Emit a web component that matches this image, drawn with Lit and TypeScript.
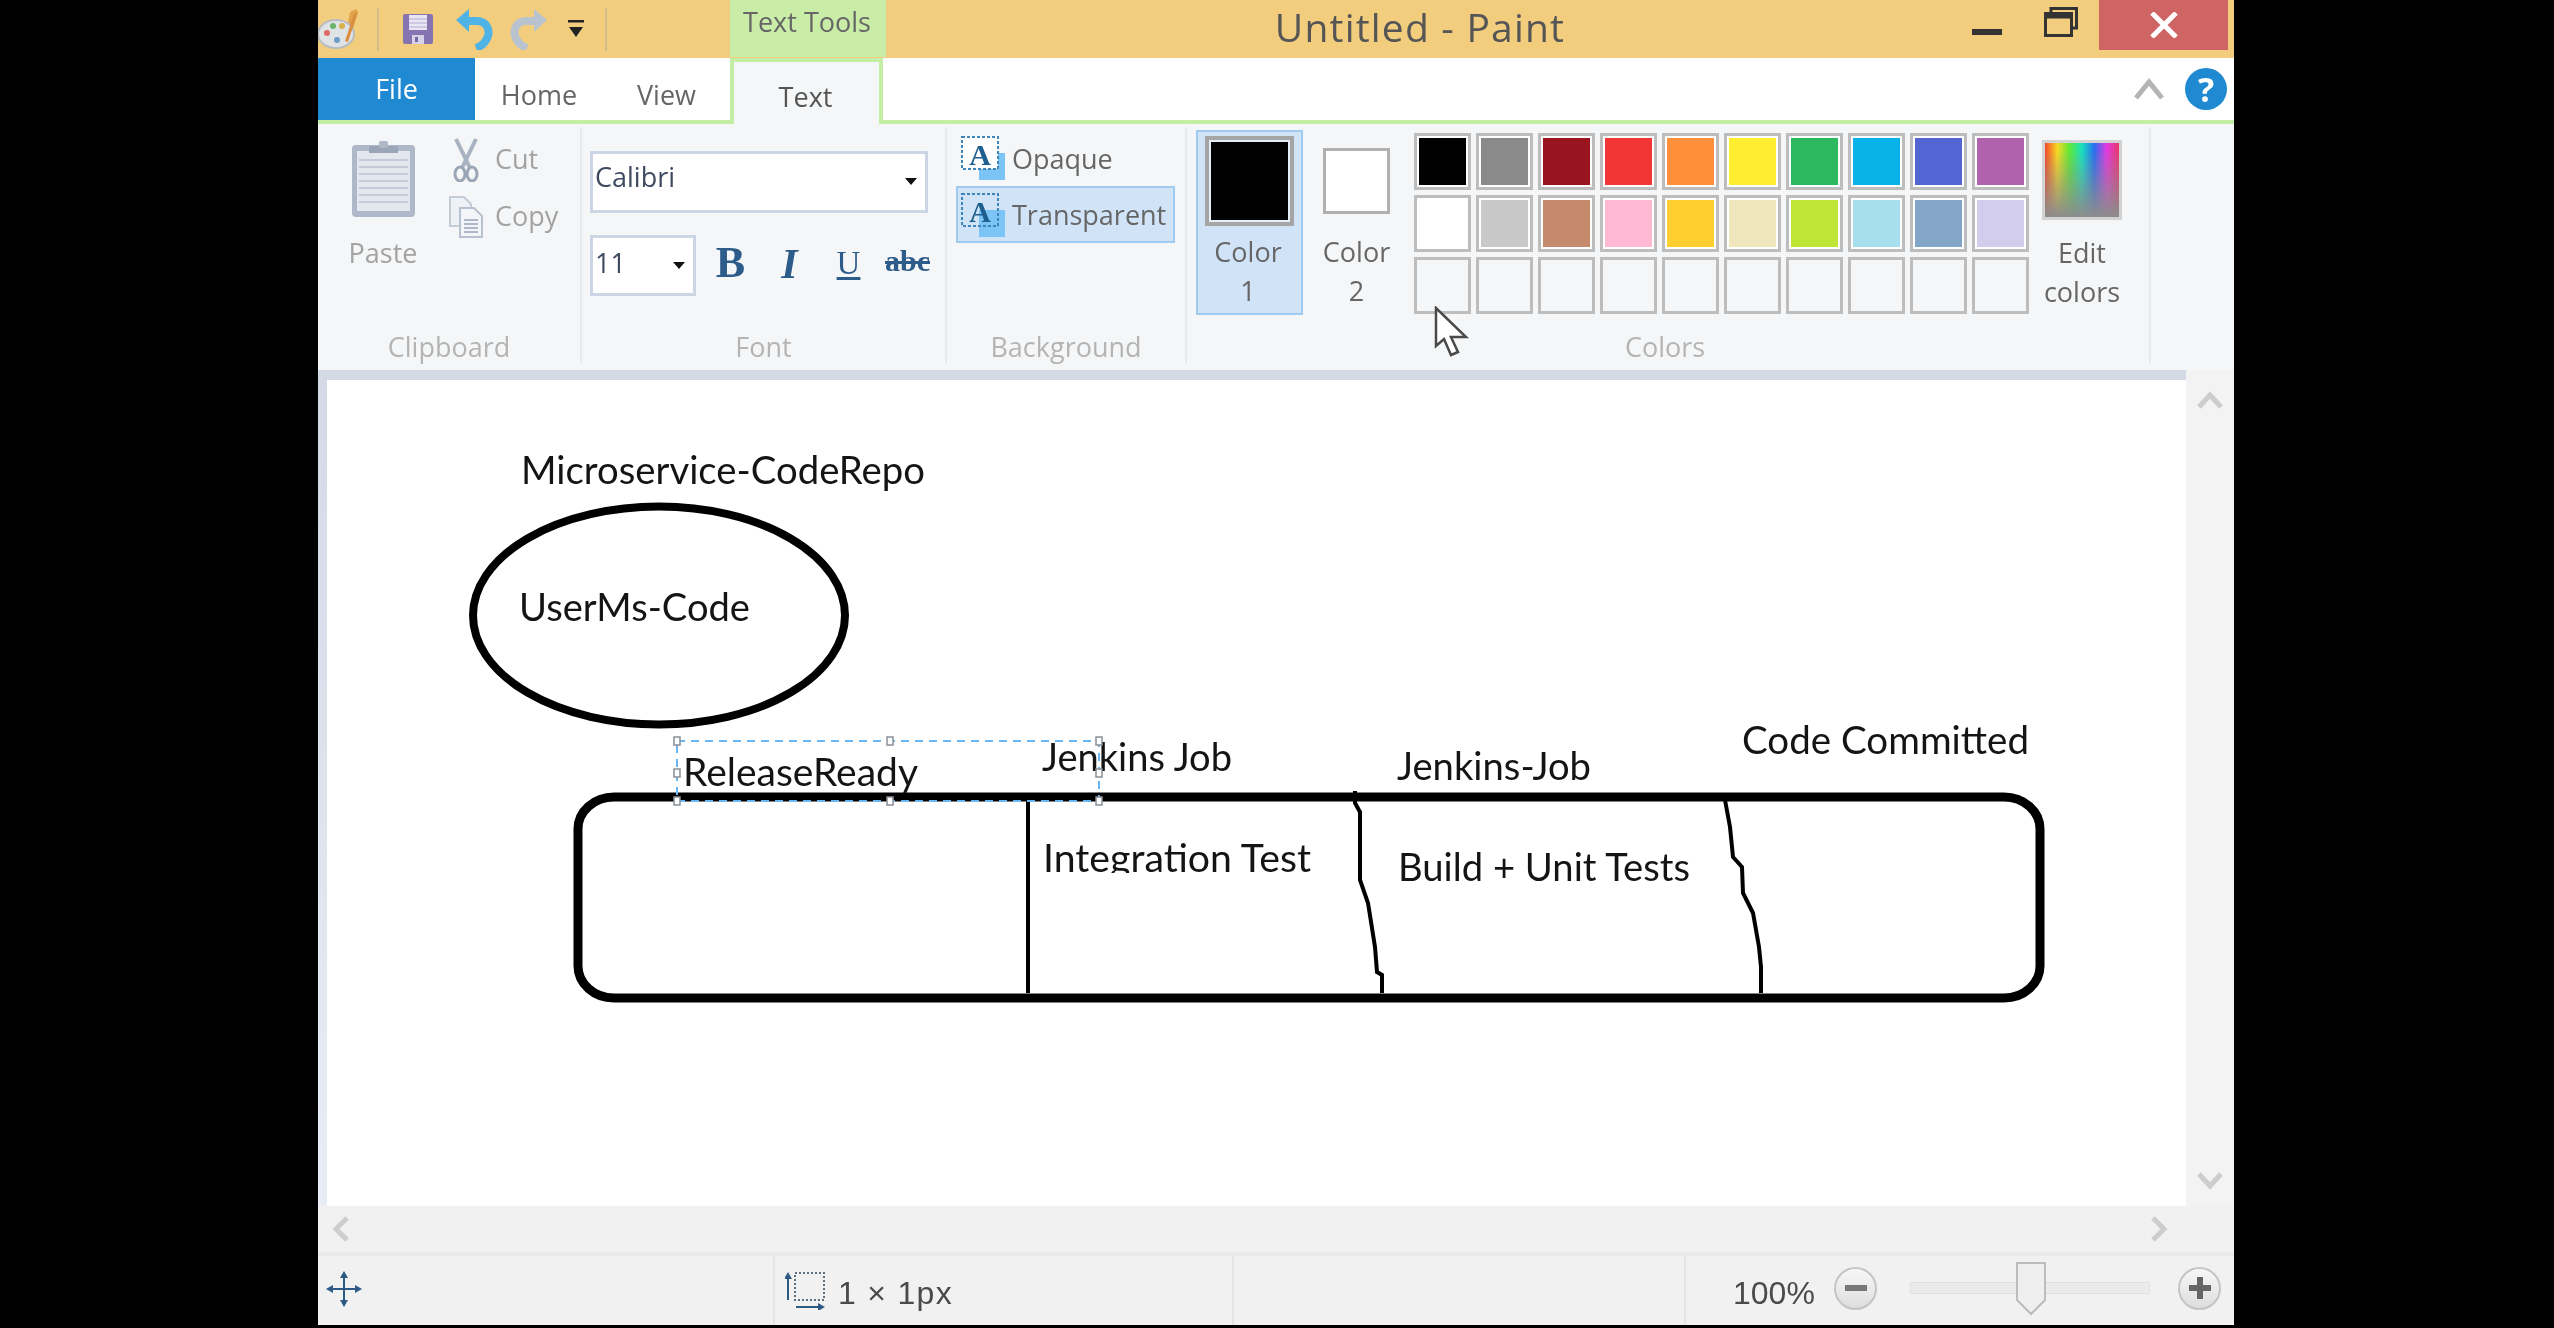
import { LitElement, html, css, svg } from "lit";
import { customElement } from "lit/decorators.js";

const STANDARD_COLORS = [
  "#000000", "#8a8a8a", "#98141f", "#f23535", "#ff8f3a", "#ffee30", "#2cb85f", "#09b3ea", "#5365d3", "#b062ad",
  "#ffffff", "#c8c8c8", "#c58a6c", "#ffb9d2", "#ffce30", "#f1e7bd", "#bfe537", "#a8dfee", "#83a6c8", "#d2cdea",
];

// text, x, baseline, width - page coordinates, the svg viewBox lines up with them
const LABELS: [string, number, number, number][] = [
  ["Microservice-CodeRepo", 521, 484, 404],
  ["UserMs-Code", 519, 621, 231],
  ["ReleaseReady", 683, 786, 235],
  ["Jenkins Job", 1042, 771, 190],
  ["Jenkins-Job", 1397, 780, 194],
  ["Code Committed", 1742, 754, 287],
  ["Build + Unit Tests", 1398, 881, 292],
];

const HANDLES: [number, number][] = [
  [677, 741], [890, 741], [1099, 741],
  [677, 773], [1099, 773],
  [677, 801], [890, 801], [1099, 801],
];

@customElement("app-root")
export class AppRoot extends LitElement {
  static styles = css`
    :host {
      display: block;
      width: 2554px;
      height: 1328px;
      background: #000;
      overflow: hidden;
      font-family: "Open Sans", "Noto Sans", sans-serif;
      font-size: 27px;
      color: #666;
    }
    .window {
      margin-left: 318px;
      width: 1916px;
      height: 1325px;
      display: flex;
      flex-direction: column;
      background: #f5f6f7;
      filter: blur(0.7px);
    }
    svg { display: block; flex: none; }

    /* title bar */
    .titlebar {
      height: 58px;
      flex: none;
      display: flex;
      background: #f2cd7e;
    }
    .qat {
      width: 412px;
      flex: none;
      display: flex;
      align-items: center;
    }
    .qat-sep {
      width: 2px;
      height: 43px;
      background: #d3bd8d;
      margin-left: 15px;
      margin-right: 24px;
      flex: none;
    }
    .qat-sep.last { margin-left: 21px; margin-right: 0; }
    .qat-undo { margin-left: 22px; }
    .qat-redo { margin-left: 17px; }
    .qat-more { margin-left: 20px; }
    .context-title {
      width: 156px;
      flex: none;
      height: 57px;
      background: #c9eda7;
      text-align: center;
      line-height: 44px;
      color: #666;
      padding-right: 2px;
      box-sizing: border-box;
    }
    .title {
      flex: 1;
      text-align: center;
      font-size: 39px;
      letter-spacing: 1.2px;
      line-height: 54px;
      color: #555;
      margin-right: 18px;
    }
    .winctl {
      display: flex;
      align-items: flex-start;
      flex: none;
      margin-right: 6px;
    }
    .min {
      width: 30px;
      height: 6px;
      margin-top: 29px;
      background: #333;
    }
    .restore { margin: 7px 21px 0 42px; }
    .close {
      width: 129px;
      height: 50px;
      background: #cf6464;
      display: flex;
      align-items: center;
      justify-content: center;
    }

    /* tabs */
    .tabs {
      height: 66px;
      flex: none;
      display: flex;
      background: #fff;
      box-sizing: border-box;
      border-bottom: 4px solid #c5eea5;
    }
    .tab {
      text-align: center;
      line-height: 74px;
      flex: none;
    }
    .tab.file {
      width: 157px;
      background: #1f8ad1;
      color: #fff;
      line-height: 62px;
    }
    .tab.home { width: 128px; }
    .tab.view { width: 127px; }
    .tab.text {
      width: 153px;
      height: 66px;
      box-sizing: border-box;
      background: #f5f6f7;
      border: 4px solid #c5eea5;
      border-bottom: none;
      line-height: 70px;
      color: #555;
      padding-right: 2px;
    }
    .tab-end {
      margin-left: auto;
      display: flex;
      align-items: center;
      padding-right: 7px;
      padding-bottom: 1px;
    }
    .help {
      width: 42px;
      height: 42px;
      margin-left: 20px;
      border-radius: 50%;
      background: #1f8ad1;
      color: #fff;
      font-weight: 700;
      font-size: 34px;
      line-height: 42px;
      text-align: center;
    }

    /* ribbon */
    .ribbon {
      height: 246px;
      flex: none;
      box-sizing: border-box;
      padding: 3px 0 7px;
      display: flex;
      position: relative;
      background: #f5f6f7;
    }
    .group {
      flex: none;
      box-sizing: border-box;
      border-right: 2px solid #e7e9ec;
      display: flex;
      flex-direction: column;
    }
    .group.clipboard { width: 264px; }
    .group.font { width: 365px; }
    .group.background { width: 240px; }
    .group.colors { width: 964px; }
    .group-body { height: 204px; display: flex; }
    .group-label {
      height: 32px;
      line-height: 32px;
      text-align: center;
      color: #b4b4b4;
    }
    .group.colors .group-label { padding-right: 6px; }
    .disabled { color: #a3a3a3; }

    .paste {
      width: 130px;
      flex: none;
      display: flex;
      flex-direction: column;
      align-items: center;
      padding-top: 13px;
    }
    .paste span { margin-top: 17px; line-height: 36px; }
    .clip-rows { padding-top: 3px; }
    .clip-row {
      height: 57px;
      display: flex;
      align-items: center;
    }
    .clip-icon {
      width: 36px;
      margin-right: 11px;
      display: flex;
      justify-content: center;
      padding-top: 2px;
    }

    .font-body {
      flex-direction: column;
      padding: 24px 0 0 8px;
    }
    .combo {
      box-sizing: border-box;
      border: 3px solid #ccd5e3;
      background: #fff;
      display: flex;
      justify-content: space-between;
      padding: 0 6px 0 2px;
      color: #3e4a5f;
    }
    .combo.family {
      width: 338px;
      height: 62px;
      line-height: 46px;
    }
    .combo.size {
      width: 106px;
      height: 61px;
      line-height: 50px;
    }
    .caret {
      width: 0;
      height: 0;
      border: 6px solid transparent;
      border-top: 7px solid #111;
      border-bottom: none;
      margin: 24px 2px 0 0;
    }
    .font-row {
      display: flex;
      align-items: center;
      margin-top: 21px;
    }
    .fmt {
      width: 59px;
      flex: none;
      text-align: center;
      font-family: "Liberation Serif", serif;
      color: #2e5c8a;
      line-height: 54px;
      padding-bottom: 3px;
    }
    .fmt.b { margin-left: 5px; font-weight: 700; font-size: 44px; padding-bottom: 4px; }
    .fmt.i { font-style: italic; font-weight: 700; font-size: 42px; }
    .fmt.u {
      font-size: 33px;
      text-decoration: underline;
      text-underline-offset: 3px;
      padding-bottom: 4px;
    }
    .fmt.s {
      font-size: 30px;
      font-weight: 700;
      text-decoration: line-through;
      padding-bottom: 8px;
    }

    .bg-body {
      flex-direction: column;
      padding: 2px 0 0 9px;
    }
    .bg-btn {
      width: 219px;
      height: 57px;
      box-sizing: border-box;
      padding-left: 3px;
      display: flex;
      align-items: center;
      gap: 7px;
      border: 2px solid transparent;
    }
    .bg-btn.on {
      background: #d1e4f7;
      border-color: #9fcbf3;
    }
    .bg-text { padding-top: 2px; }
    .bg-btn.on .bg-text { padding-top: 0; }

    .colors-body { padding-left: 9px; }
    .pick {
      width: 107px;
      flex: none;
      box-sizing: border-box;
      margin-top: 3px;
      height: 185px;
      display: flex;
      flex-direction: column;
      align-items: center;
      text-align: center;
      line-height: 39px;
      border: 2px solid transparent;
    }
    .pick.on {
      background: #d1e4f7;
      border-color: #9fcbf3;
    }
    .pick-text { padding-right: 3px; }
    .chip {
      box-sizing: border-box;
      flex: none;
    }
    .chip.one {
      width: 89px;
      height: 90px;
      margin-top: 4px;
      margin-bottom: 6px;
      border: 4px solid #a5a5a5;
      padding: 2px;
      background: #e4eef8;
    }
    .chip.one div { width: 100%; height: 100%; background: #000; }
    .chip.two {
      width: 67px;
      height: 66px;
      margin-top: 16px;
      margin-bottom: 18px;
      border: 3px solid #b0b0b0;
      background: #fff;
    }
    .palette {
      margin: 6px 0 0 4px;
      display: grid;
      grid-template-columns: repeat(10, 57px);
      grid-auto-rows: 57px;
      gap: 5px;
      flex: none;
      height: 181px;
    }
    .cell {
      box-sizing: border-box;
      border: 3px solid #bdbdbd;
      padding: 2px;
      background: #fff;
    }
    .cell div { width: 100%; height: 100%; }
    .cell.empty { background: #f5f6f7; }
    .edit {
      margin-left: 13px;
      width: 80px;
      flex: none;
      display: flex;
      flex-direction: column;
      align-items: center;
      text-align: center;
      line-height: 39px;
      color: #666;
      padding-top: 13px;
    }
    .rainbow {
      width: 80px;
      height: 80px;
      box-sizing: border-box;
      border: 3px solid #d2d2d2;
      margin-bottom: 13px;
      background:
        linear-gradient(to bottom, rgba(150, 150, 150, 0) 10%, rgba(140, 140, 140, 1) 100%),
        linear-gradient(to right, #f2472d, #f7d923, #5fe838, #18e0c0, #2a6ef0, #e23be0, #e8386a);
    }
    .cursor {
      position: absolute;
      left: 1116px;
      top: 182px;
    }

    /* work area */
    .work {
      flex: 1;
      min-height: 0;
      display: flex;
    }
    .canvas-wrap {
      width: 1868px;
      flex: none;
      box-sizing: border-box;
      padding: 10px 0 0 9px;
      background: linear-gradient(#d3dae6, #e8edf5);
    }
    .canvas {
      height: 100%;
      background: #fff;
      position: relative;
    }
    .vscroll {
      flex: 1;
      background: #f3f3f3;
      display: flex;
      flex-direction: column;
      align-items: center;
      justify-content: space-between;
      padding: 20px 0 15px;
    }
    .hscroll {
      height: 46px;
      flex: none;
      background: #f1f1f1;
      display: flex;
      align-items: center;
      justify-content: space-between;
      padding: 0 66px 0 14px;
    }
    .canvas-draw text {
      font-family: "Lato", "Open Sans", sans-serif;
      font-size: 38px;
      fill: #141414;
    }

    /* status bar */
    .status {
      height: 73px;
      flex: none;
      box-sizing: border-box;
      border-top: 4px solid #e9e9e9;
      background: #f1f1f1;
      display: flex;
      font-family: "Liberation Sans", sans-serif;
      font-size: 32px;
      color: #4a4a4a;
    }
    .pane {
      box-sizing: border-box;
      flex: none;
      display: flex;
      align-items: center;
      border-right: 2px solid #e4e4e4;
    }
    .pane.pos { width: 457px; padding: 0 0 3px 8px; }
    .pane.size { width: 459px; padding-left: 10px; gap: 13px; }
    .pane.spacer { width: 452px; }
    .pane-text { padding-top: 6px; letter-spacing: 1.3px; }
    .zoom {
      flex: 1;
      display: flex;
      align-items: center;
      padding: 0 0 5px 47px;
    }
    .zoom-text { padding-top: 11px; width: 101px; flex: none; }
    .zoom-btn {
      width: 43px;
      height: 43px;
      flex: none;
      box-sizing: border-box;
      border-radius: 50%;
      border: 2px solid #c4c4c4;
      background: linear-gradient(#f7f7f7, #dedede);
      display: flex;
      align-items: center;
      justify-content: center;
    }
    .slider {
      width: 240px;
      height: 12px;
      flex: none;
      box-sizing: border-box;
      margin: 0 28px 0 33px;
      background: #ebebeb;
      border: 1px solid #e0e0e0;
      position: relative;
    }
    .thumb {
      position: absolute;
      left: 105px;
      top: -21px;
    }
  `;

  private palette() {
    return html`
      <svg width="44" height="42" viewBox="0 0 44 42">
        <path d="M32 4 L38 1 L40 4 L30 36 L26 36 Z" fill="#e2a24c" />
        <ellipse cx="18" cy="26" rx="18" ry="14" fill="#dfe3e6" stroke="#b9bcc0" stroke-width="2" />
        <circle cx="9" cy="25" r="3" fill="#e06a6a" />
        <circle cx="15" cy="18" r="3" fill="#6cb26a" />
        <circle cx="24" cy="18" r="3" fill="#d9b04a" />
        <circle cx="19" cy="32" r="3" fill="#6c9cc8" />
        <path d="M36 6 L40 4 L30 34 L27 33 Z" fill="#d98f3f" />
      </svg>
    `;
  }

  private floppy() {
    return html`
      <svg width="30" height="30" viewBox="0 0 30 30">
        <rect width="30" height="30" rx="2" fill="#8674b0" />
        <rect x="6" y="1" width="18" height="15" fill="#e8e6f2" />
        <path d="M6 5 H24 M6 9 H24 M6 13 H24" stroke="#b6abd3" stroke-width="1" />
        <rect x="9" y="21" width="12" height="9" fill="#d6d1e6" />
        <rect x="12" y="23" width="3" height="5" fill="#7a68a6" />
      </svg>
    `;
  }

  private arrow(color: string, flip: boolean) {
    return html`
      <svg width="38" height="42" viewBox="0 0 38 42" class=${flip ? "qat-redo" : "qat-undo"}>
        <g transform=${flip ? "translate(38 0) scale(-1 1)" : ""}>
          <path d="M12 13 H22 C31 13 35 21 33 28 C31 34 27 38 21 40" fill="none" stroke=${color} stroke-width="8" />
          <path d="M14 1 V24 L1 12 Z" fill=${color} />
        </g>
      </svg>
    `;
  }

  private clipboard() {
    return html`
      <svg width="65" height="78" viewBox="0 0 65 78">
        <rect x="1" y="5" width="63" height="72" rx="4" fill="#aeb8c8" />
        <rect x="6" y="11" width="53" height="60" fill="#e3e7ee" />
        <path d="M8 20 H57 M8 27 H57 M8 34 H57 M8 41 H57 M8 48 H57 M8 55 H57 M8 62 H57" stroke="#c3cbd8" stroke-width="2" />
        <rect x="18" y="6" width="29" height="7" fill="#9aa5b8" />
        <rect x="28" y="1" width="9" height="7" rx="2" fill="#aeb8c8" />
      </svg>
    `;
  }

  private scissors() {
    return html`
      <svg width="28" height="44" viewBox="0 0 28 44">
        <path d="M4 1 L18 30 M24 1 L10 30" stroke="#a9b3c2" stroke-width="4" fill="none" />
        <ellipse cx="8" cy="36" rx="5" ry="7" stroke="#9aa5b5" stroke-width="3" fill="none" />
        <ellipse cx="20" cy="36" rx="5" ry="7" stroke="#9aa5b5" stroke-width="3" fill="none" />
      </svg>
    `;
  }

  private copy() {
    return html`
      <svg width="34" height="42" viewBox="0 0 34 42">
        <path d="M1 1 H15 L22 8 V30 H1 Z" fill="#eef1f5" stroke="#c4ccd8" stroke-width="2" />
        <path d="M11 12 H25 L33 20 V41 H11 Z" fill="#f3f5f8" stroke="#b8c1cf" stroke-width="2" />
        <path d="M15 24 H29 M15 28 H29 M15 32 H29 M15 36 H29" stroke="#aeb8c8" stroke-width="2" />
      </svg>
    `;
  }

  private textBg(filled: boolean) {
    return html`
      <svg width="44" height="44" viewBox="0 0 44 44">
        <rect x="18" y="17" width="26" height="27" fill="#7cc4f5" />
        <rect x="1" y="1" width="36" height="32" fill=${filled ? "#fff" : "none"} stroke="#3d85b8" stroke-width="2" stroke-dasharray="3 2" />
        <text x="19" y="29" text-anchor="middle" font-family="Liberation Serif" font-weight="700" font-size="30" fill="#1f5f8f">A</text>
      </svg>
    `;
  }

  private chevron(d: string, w: number, h: number, color = "#cdcdcd") {
    return html`
      <svg width=${w} height=${h} viewBox="0 0 ${w} ${h}">
        <path d=${d} fill="none" stroke=${color} stroke-width="5" />
      </svg>
    `;
  }

  private drawing() {
    return html`
      <svg class="canvas-draw" width="1859" height="826" viewBox="327 380 1859 826">
        <ellipse cx="659" cy="615.5" rx="186" ry="109" fill="none" stroke="#000" stroke-width="8" />
        <rect x="578" y="797" width="1462" height="201" rx="36" ry="32" fill="none" stroke="#000" stroke-width="9" />
        <path d="M1028 800 V993" stroke="#000" stroke-width="4" />
        <path d="M1355 791 L1355 803 L1360 812 L1360 880 L1368 903 L1375 947 L1377 972 L1382 975 L1382 993" fill="none" stroke="#000" stroke-width="4" />
        <path d="M1725 800 L1730 827 L1733 857 L1742 867 L1743 893 L1753 913 L1759 947 L1761 967 L1761 993" fill="none" stroke="#000" stroke-width="4" />
        ${LABELS.map(
          ([t, x, y, w]) =>
            svg`<text x=${x} y=${y} textLength=${w} lengthAdjust="spacingAndGlyphs">${t}</text>`,
        )}
        <clipPath id="cut-descender"><rect x="1040" y="840" width="280" height="33" /></clipPath>
        <text x="1043" y="872" textLength="268" lengthAdjust="spacingAndGlyphs" clip-path="url(#cut-descender)">Integration Test</text>
        <rect x="677" y="741" width="422" height="60" fill="none" stroke="#6ab6f0" stroke-width="2" stroke-dasharray="8 6" />
        ${HANDLES.map(
          ([x, y]) =>
            svg`<rect x=${x - 3} y=${y - 4} width="6" height="8" fill="#fff" stroke="#8a8f96" stroke-width="1.5" />`,
        )}
      </svg>
    `;
  }

  render() {
    return html`
      <div class="window">
        <div class="titlebar">
          <div class="qat">
            ${this.palette()}
            <div class="qat-sep"></div>
            ${this.floppy()}
            ${this.arrow("#4fb3e5", false)}
            ${this.arrow("#b9c3cf", true)}
            <svg class="qat-more" width="16" height="18" viewBox="0 0 16 18">
              <rect y="0" width="16" height="2.5" fill="#222" />
              <path d="M1 7 H15 L8 17 Z" fill="#222" />
            </svg>
            <div class="qat-sep last"></div>
          </div>
          <div class="context-title">Text Tools</div>
          <div class="title">Untitled - Paint</div>
          <div class="winctl">
            <div class="min"></div>
            <svg class="restore" width="34" height="30" viewBox="0 0 34 30">
              <path d="M7 5 V1.5 H32.5 V21 H28" fill="none" stroke="#333" stroke-width="3" />
              <rect x="1.5" y="6.5" width="26" height="22" fill="none" stroke="#333" stroke-width="3" />
              <rect x="1.5" y="6.5" width="26" height="5" fill="#333" />
            </svg>
            <div class="close">
              <svg width="28" height="26" viewBox="0 0 28 26">
                <path d="M2 1 L26 25 M26 1 L2 25" stroke="#fff" stroke-width="5" />
              </svg>
            </div>
          </div>
        </div>

        <div class="tabs">
          <div class="tab file">File</div>
          <div class="tab home">Home</div>
          <div class="tab view">View</div>
          <div class="tab text">Text</div>
          <div class="tab-end">
            ${this.chevron("M3 22 L16 6 L29 22", 32, 26, "#b4b4b4")}
            <div class="help">?</div>
          </div>
        </div>

        <div class="ribbon">
          <div class="group clipboard">
            <div class="group-body">
              <div class="paste disabled">
                ${this.clipboard()}
                <span>Paste</span>
              </div>
              <div class="clip-rows disabled">
                <div class="clip-row"><div class="clip-icon">${this.scissors()}</div>Cut</div>
                <div class="clip-row"><div class="clip-icon">${this.copy()}</div>Copy</div>
              </div>
            </div>
            <div class="group-label">Clipboard</div>
          </div>

          <div class="group font">
            <div class="group-body font-body">
              <div class="combo family">Calibri<span class="caret"></span></div>
              <div class="font-row">
                <div class="combo size">11<span class="caret"></span></div>
                <div class="fmt b">B</div>
                <div class="fmt i">I</div>
                <div class="fmt u">U</div>
                <div class="fmt s">abc</div>
              </div>
            </div>
            <div class="group-label">Font</div>
          </div>

          <div class="group background">
            <div class="group-body bg-body">
              <div class="bg-btn">${this.textBg(true)}<span class="bg-text">Opaque</span></div>
              <div class="bg-btn on">${this.textBg(false)}<span class="bg-text">Transparent</span></div>
            </div>
            <div class="group-label">Background</div>
          </div>

          <div class="group colors">
            <div class="group-body colors-body">
              <div class="pick on">
                <div class="chip one"><div></div></div>
                <span class="pick-text">Color<br />1</span>
              </div>
              <div class="pick">
                <div class="chip two"></div>
                Color<br />2
              </div>
              <div class="palette">
                ${STANDARD_COLORS.map(
                  (c) => html`<div class="cell"><div style="background:${c}"></div></div>`,
                )}
                ${Array.from({ length: 10 }, () => html`<div class="cell empty"></div>`)}
              </div>
              <div class="edit">
                <div class="rainbow"></div>
                Edit<br />colors
              </div>
            </div>
            <div class="group-label">Colors</div>
          </div>

          <svg class="cursor" width="36" height="52" viewBox="0 0 36 52">
            <path d="M2 2 L2 40 L10 33 L17 49 L24 46 L17 31 L32 31 Z" fill="#fff" stroke="#4a4a4a" stroke-width="2.5" />
          </svg>
        </div>

        <div class="work">
          <div class="canvas-wrap">
            <div class="canvas">${this.drawing()}</div>
          </div>
          <div class="vscroll">
            ${this.chevron("M3 17 L14 5 L25 17", 28, 20)}
            ${this.chevron("M3 3 L14 15 L25 3", 28, 20)}
          </div>
        </div>

        <div class="hscroll">
          ${this.chevron("M15 3 L4 14 L15 25", 18, 28)}
          ${this.chevron("M3 3 L14 14 L3 25", 18, 28)}
        </div>

        <div class="status">
          <div class="pane pos">
            <svg width="36" height="36" viewBox="0 0 36 36">
              <path d="M18 3 V33 M3 18 H33" stroke="#2c5a85" stroke-width="2" />
              <path d="M18 0 L22 7 H14 Z M18 36 L22 29 H14 Z M0 18 L7 14 V22 Z M36 18 L29 14 V22 Z" fill="#2c5a85" />
            </svg>
          </div>
          <div class="pane size">
            <svg width="40" height="38" viewBox="0 0 40 38">
              <rect x="10" y="1" width="29" height="27" fill="none" stroke="#5f6f82" stroke-width="2" stroke-dasharray="2 2" />
              <path d="M3 5 V28" stroke="#2c5a85" stroke-width="2" />
              <path d="M3 0 L7 7 H-1 Z" fill="#2c5a85" />
              <path d="M11 35 H35" stroke="#2c5a85" stroke-width="2" />
              <path d="M40 35 L33 31 V39 Z" fill="#2c5a85" />
            </svg>
            <span class="pane-text">1 × 1px</span>
          </div>
          <div class="pane spacer"></div>
          <div class="zoom">
            <span class="zoom-text">100%</span>
            <div class="zoom-btn">
              <svg width="22" height="6" viewBox="0 0 22 6"><rect width="22" height="6" fill="#777" /></svg>
            </div>
            <div class="slider">
              <svg class="thumb" width="30" height="54" viewBox="0 0 30 54">
                <path d="M1 1 H29 V38 L15 52 L1 38 Z" fill="#efefef" stroke="#bcbcbc" stroke-width="2" />
              </svg>
            </div>
            <div class="zoom-btn">
              <svg width="22" height="22" viewBox="0 0 22 22"><path d="M11 0 V22 M0 11 H22" stroke="#666" stroke-width="6" /></svg>
            </div>
          </div>
        </div>
      </div>
    `;
  }
}
